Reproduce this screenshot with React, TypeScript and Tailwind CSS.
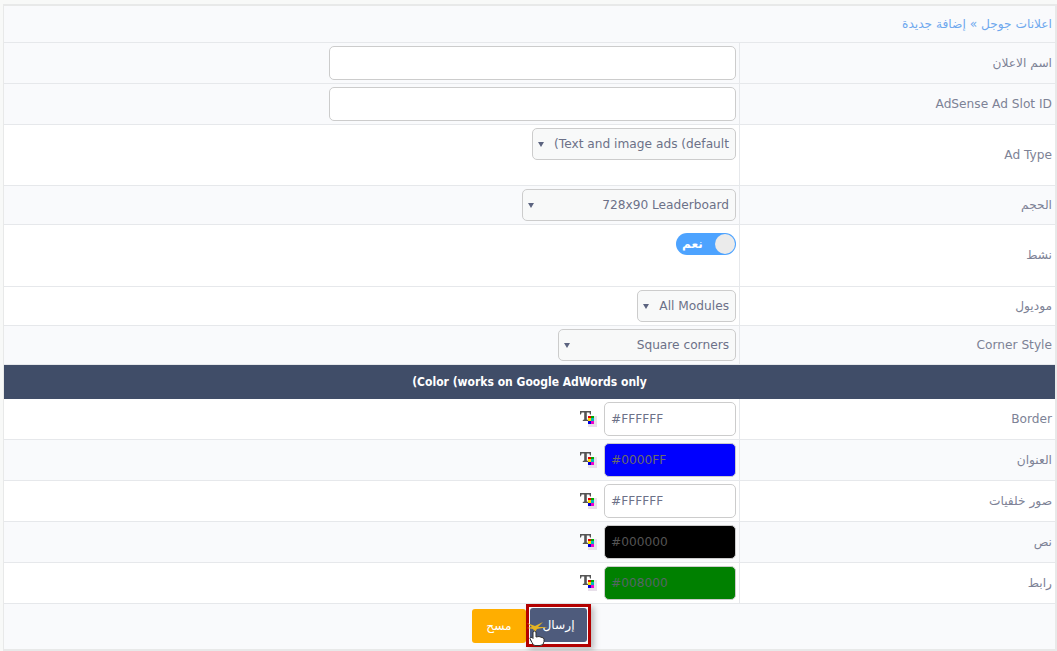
import React from 'react';

function ColorIcon() {
  return (
    <svg width="17" height="16" viewBox="0 0 17 16" className="shrink-0 mt-[9px]">
      <path d="M0 0h11v3.500H10L9.400 1.600H6.800V8.500L8.200 9v1H2.800V9L4.200 8.500V1.600H1.600L1 3.500H0z" fill="#555" />
      <rect x="8" y="5" width="9" height="11" fill="#e8e0ea" />
      <rect x="8" y="5" width="3" height="2" fill="#e00" />
      <rect x="11" y="5" width="3" height="2" fill="#0a0" />
      <rect x="8" y="7" width="3" height="3" fill="#fd0" />
      <rect x="11" y="7" width="3" height="3" fill="#0bb" />
      <rect x="8" y="10" width="3" height="3" fill="#00d" />
      <rect x="11" y="10" width="3" height="3" fill="#e0c" />
    </svg>
  );
}

function Row({ label, alt, h, children }: { label: string; alt?: boolean; h: string; children: React.ReactNode }) {
  return (
    <div className={`flex border-b border-[#e6e8eb] ${h} ${alt ? 'bg-[#f9fafc]' : 'bg-white'}`}>
      <div className="flex-1 flex justify-end items-start pt-[3px] pr-[3px]">{children}</div>
      <div className="w-[316px] shrink-0 flex items-center px-[3px] text-[#7d8296] border-l border-[#e6e8eb]">
        <span dir="rtl" className="w-full text-right">{label}</span>
      </div>
    </div>
  );
}

function Select({ text, w }: { text: string; w: string }) {
  return (
    <div className={`${w} h-[32px] flex items-center justify-between pl-[5px] pr-[6px] border border-[#ccc] rounded-[5px] bg-[#f8f9f9] text-[#6c7188]`}>
      <svg width="6" height="5" viewBox="0 0 6 5"><path d="M0 0h6L3 5z" fill="#5c6480" /></svg>
      <span>{text}</span>
    </div>
  );
}

function ColorRow({ label, value, bg, text, alt }: { label: string; value: string; bg: string; text: string; alt?: boolean }) {
  return (
    <Row label={label} alt={alt} h="h-[41px]">
      <div className="flex items-start gap-[7px]">
        <ColorIcon />
        <div className={`w-[132px] h-[34px] flex items-center px-[6px] border border-[#ccc] rounded-[5px] ${bg} ${text}`}>{value}</div>
      </div>
    </Row>
  );
}

export default function App() {
  return (
    <div className="w-[1057px] h-[651px] overflow-hidden bg-[#f8f9f8] pt-[4px] pl-[3px] text-[12.2px]" style={{ fontFamily: '"DejaVu Sans", sans-serif' }}>
      <div className="h-[647px] border-y-2 border-l border-r-2 border-[#e8e9e9] bg-[#f9fafc]">
        <div className="h-[37px] flex items-center border-b border-[#e6e8eb] text-[#6ea8ee] bg-[#f9fafc] pr-[3px]">
          <span className="w-full text-right" dir="rtl">اعلانات جوجل » إضافة جديدة</span>
        </div>
        <Row label="اسم الاعلان" alt h="h-[41px]">
          <div className="w-[407px] h-[34px] border border-[#ccc] rounded-[5px] bg-white" />
        </Row>
        <Row label="AdSense Ad Slot ID" alt h="h-[41px]">
          <div className="w-[407px] h-[34px] border border-[#ccc] rounded-[5px] bg-white" />
        </Row>
        <Row label="Ad Type" h="h-[61px]">
          <Select text="(Text and image ads (default" w="w-[204px]" />
        </Row>
        <Row label="الحجم" alt h="h-[39px]">
          <Select text="728x90 Leaderboard" w="w-[214px]" />
        </Row>
        <Row label="نشط" h="h-[62px]">
          <div className="relative w-[60px] h-[22px] mt-[5px] rounded-full bg-[#4da3ff] flex items-center justify-end pr-[1px]">
            <span className="absolute left-[6px] top-[3px] text-white font-bold text-[12px] leading-[16px]" dir="rtl">نعم</span>
            <div className="w-[20px] h-[20px] rounded-full bg-[#ebebeb]" />
          </div>
        </Row>
        <Row label="موديول" h="h-[39px]">
          <Select text="All Modules" w="w-[99px]" />
        </Row>
        <Row label="Corner Style" alt h="h-[39px]">
          <Select text="Square corners" w="w-[178px]" />
        </Row>
        <div className="h-[34px] flex items-center justify-center bg-[#404d68] text-white font-bold text-[12px] font-['DejaVu_Sans_Condensed',sans-serif]">
          (Color (works on Google AdWords only
        </div>
        <ColorRow label="Border" value="#FFFFFF" bg="bg-white" text="text-[#6c7188]" />
        <ColorRow label="العنوان" value="#0000FF" bg="bg-[#0000ff]" text="text-[#6c6c66]" alt />
        <ColorRow label="صور خلفيات" value="#FFFFFF" bg="bg-white" text="text-[#6c7188]" />
        <ColorRow label="نص" value="#000000" bg="bg-black" text="text-[#555]" alt />
        <ColorRow label="رابط" value="#008000" bg="bg-[#008000]" text="text-[#566]" />
        <div className="h-[44px] flex items-start justify-center bg-[#f9fafc]">
          <div className="flex items-start ml-[4px]">
            <div className="w-[54px] h-[34px] mt-[5px] rounded-[3px] bg-[#ffae00] text-white flex items-center justify-center" dir="rtl">مسح</div>
            <div className="relative border-[3px] border-[#b30000] w-[65px] h-[43px] p-[1px] shadow-[3px_3px_6px_rgba(0,0,0,0.25)]">
              <div className="w-full h-[34px] rounded-[3px] bg-[#4e5b7c] text-white flex items-center justify-center" dir="rtl">إرسال</div>
              <svg width="30" height="26" viewBox="0 0 30 26" className="absolute left-[-3px] top-[14px]">
                <path d="M1 2l8 3 8-4-5 5 10 0-11 2-2 3-2-3-6-1 5-1z" fill="#e6b422" />
                <path d="M7 11q1-2 3 0v5l3-.5 3 1q2 0 2 2v2q0 4-4 4h-5q-2 0-3-3l-2-4q0-2 2-1l1 1z" fill="#fff" stroke="#333" strokeWidth="1" />
              </svg>
            </div>
          </div>
        </div>
      </div>
    </div>
  );
}
